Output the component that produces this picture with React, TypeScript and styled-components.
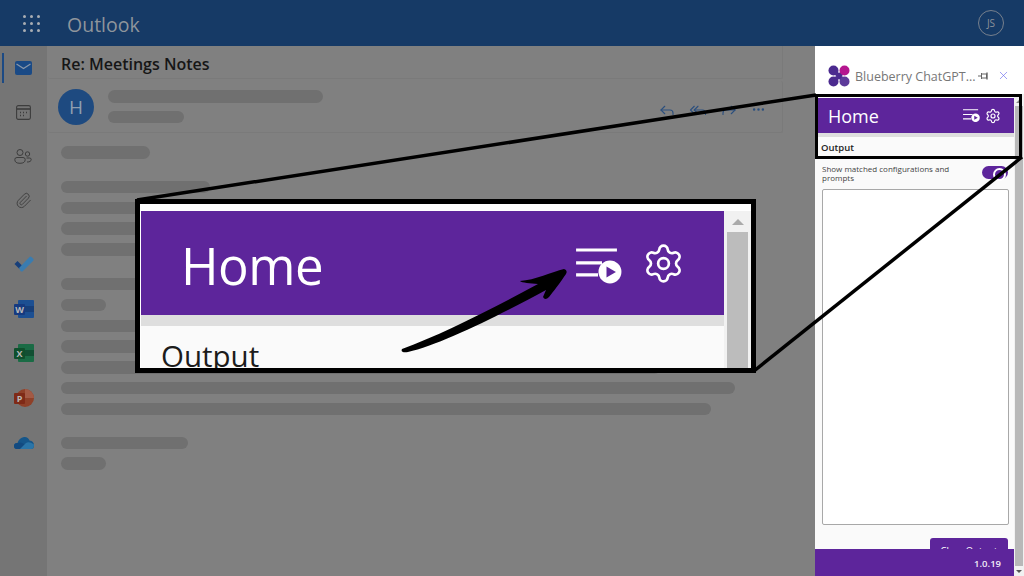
import React from "react";
import styled, { createGlobalStyle } from "styled-components";
import { Paperclip, Reply, ReplyAll, Forward, MoreHorizontal, Settings, X } from "lucide-react";

const Global = createGlobalStyle`
  html, body { margin: 0; padding: 0; height: 100%; background: #808080; }
  body { font-family: "Open Sans", "Liberation Sans", sans-serif; }
  * { box-sizing: border-box; }
`;

const PURPLE = "#5d259b";

const Root = styled.div`
  position: relative;
  width: 1024px;
  height: 576px;
  overflow: hidden;
  display: flex;
  flex-direction: column;
`;

const TopBar = styled.header`
  height: 46px;
  flex: none;
  background: #163a66;
  display: flex;
  align-items: center;
  padding: 0 20px 0 23px;
`;

const Waffle = styled.div`
  display: grid;
  grid-template-columns: repeat(3, 3px);
  gap: 4px;
  margin-right: 27px;
`;

const WaffleDot = styled.span`
  width: 3px;
  height: 3px;
  border-radius: 50%;
  background: #a9adb3;
`;

const Brand = styled.div`
  font-size: 19.5px;
  font-weight: 500;
  color: #8f959c;
  flex: 1;
  line-height: 46px;
  padding-top: 3px;
`;

const UserCircle = styled.div`
  width: 26px;
  height: 26px;
  border-radius: 50%;
  border: 1.5px solid #77808d;
  color: #8b919a;
  font-size: 10px;
  display: flex;
  align-items: center;
  justify-content: center;
`;

const Body = styled.div`
  flex: 1;
  display: flex;
  min-height: 0;
`;

const Rail = styled.nav`
  width: 47px;
  flex: none;
  background: #757575;
  display: flex;
  flex-direction: column;
  position: relative;
`;

const RailItem = styled.div<{ $active?: boolean }>`
  height: 44px;
  flex: none;
  display: flex;
  align-items: center;
  justify-content: center;
  padding-right: 1px;
  color: #3d3d3d;
  position: relative;
  ${(p) =>
    p.$active &&
    `&::before { content: ""; position: absolute; left: 2px; top: 7px; width: 2px; height: 30px; background: #1c4a84; }`}
`;

const AppItem = styled.div<{ $mt?: number }>`
  height: 44.5px;
  flex: none;
  margin-top: ${(p) => p.$mt ?? 0}px;
  display: flex;
  align-items: center;
  justify-content: center;
`;

const Main = styled.main`
  flex: 1;
  min-width: 0;
  background: #808080;
  padding-right: 32px;
  display: flex;
  flex-direction: column;
`;

const SubjectCard = styled.div`
  height: 33px;
  flex: none;
  margin-left: 1px;
  border: 1px solid #7a7a7a;
  border-top: 0;
  border-left: 0;
  border-radius: 0 0 2px 2px;
  padding: 3px 0 0 13px;
  display: flex;
  align-items: center;
  font-size: 16px;
  font-weight: 600;
  color: #161616;
`;

const SenderCard = styled.div`
  height: 52px;
  flex: none;
  margin: 2px 0 0 1px;
  border: 1px solid #7a7a7a;
  border-top: 0;
  border-left: 0;
  border-radius: 2px;
  display: flex;
  align-items: center;
  padding: 0 16px 0 10px;
`;

const Avatar = styled.div`
  width: 36px;
  height: 36px;
  border-radius: 50%;
  background: #1e4a80;
  color: #8f9eb0;
  font-size: 19px;
  display: flex;
  align-items: center;
  justify-content: center;
  flex: none;
`;

const SenderLines = styled.div`
  margin-left: 14px;
  display: flex;
  flex-direction: column;
  gap: 8px;
  flex: 1;
`;

const Skeleton = styled.div<{ $w: number; $mt?: number }>`
  width: ${(p) => p.$w}px;
  height: 12.5px;
  flex: none;
  border-radius: 7px;
  background: #707070;
  margin-top: ${(p) => p.$mt ?? 0}px;
`;

const Actions = styled.div`
  display: flex;
  align-items: center;
  gap: 13px;
  color: #2b4f7e;
  margin-top: 6px;
`;

const Lines = styled.div`
  padding: 13px 0 0 14px;
  display: flex;
  flex-direction: column;
  gap: 8.3px;
`;

const Panel = styled.aside`
  width: 209px;
  flex: none;
  background: #fff;
  display: flex;
  flex-direction: column;
`;

const PanelTitle = styled.div`
  height: 48px;
  flex: none;
  display: flex;
  align-items: center;
  padding: 11px 14px 0 13px;
`;

const PanelName = styled.span`
  font-size: 12.5px;
  color: #777;
  margin: 2px 0 0 5px;
  white-space: nowrap;
  flex: 1;
`;

const PinIcon = styled.span`
  display: flex;
  margin-right: 8px;
`;

const CloseIcon = styled.span`
  color: #6a6aef;
  display: flex;
`;

const Pane = styled.div`
  flex: 1;
  min-height: 0;
  display: flex;
`;

const PaneColumn = styled.div`
  flex: 1;
  min-width: 0;
  display: flex;
  flex-direction: column;
`;

const PaneScroll = styled.div`
  width: 10px;
  flex: none;
  background: #f1f1f1;
  display: flex;
  flex-direction: column;
  align-items: center;
  padding: 6px 0 3px;
`;

const ArrowUp = styled.span`
  width: 0;
  height: 0;
  flex: none;
  border-left: 3px solid transparent;
  border-right: 3px solid transparent;
  border-bottom: 3px solid #888;
`;

const ArrowDown = styled(ArrowUp)`
  border-bottom: 0;
  border-top: 3px solid #555;
`;

const Thumb = styled.div`
  flex: 1;
  width: 8px;
  background: #b8b8b8;
  margin: 3px 0 4px;
`;

const TopGap = styled.div`
  height: 4px;
  flex: none;
  background: #fff;
`;

const HomeBar = styled.div`
  height: 35px;
  flex: none;
  background: ${PURPLE};
  display: flex;
  align-items: center;
  padding: 0 13px 0 13px;
  color: #fff;
`;

const HomeTitle = styled.div`
  flex: 1;
  font-size: 18px;
  line-height: 35px;
  padding-top: 1px;
`;

const HomeIcons = styled.div`
  display: flex;
  align-items: center;
  gap: 5px;
`;

const Strip = styled.div`
  height: 4px;
  flex: none;
  background: #dedede;
`;

const PaneBody = styled.div`
  flex: 1;
  min-height: 0;
  overflow: hidden;
  background: #fafafa;
  padding: 4px 6px 0 7px;
  display: flex;
  flex-direction: column;
`;

const OutputLabel = styled.div`
  font-size: 9.5px;
  font-weight: 600;
  line-height: 14px;
  color: #222;
  margin-left: -1px;
`;

const ToggleRow = styled.div`
  display: flex;
  justify-content: space-between;
  align-items: flex-start;
  margin-top: 10px;
`;

const ToggleText = styled.div`
  font-size: 8px;
  line-height: 8.5px;
  color: #444;
  width: 150px;
`;

const Toggle = styled.div`
  width: 26px;
  height: 13px;
  border-radius: 7px;
  background: ${PURPLE};
  position: relative;
  margin-top: 1px;
  &::after {
    content: "";
    position: absolute;
    right: 2px;
    top: 2px;
    width: 9px;
    height: 9px;
    border-radius: 50%;
    border: 2px solid #fff;
    background: ${PURPLE};
  }
`;

const OutputBox = styled.div`
  height: 336px;
  flex: none;
  margin: 7px -1px 0 0;
  background: #fff;
  border: 1px solid #a8a8a8;
  border-radius: 2px;
`;

const ClearButton = styled.button`
  align-self: flex-end;
  flex: none;
  width: 78px;
  height: 24px;
  margin-top: 13px;
  border: 0;
  border-radius: 3px;
  background: ${PURPLE};
  color: #fff;
  font: 400 9.5px "Open Sans", sans-serif;
  padding: 0;
`;

const Footer = styled.footer`
  height: 27px;
  flex: none;
  background: ${PURPLE};
  color: #f2eef8;
  font-size: 9.5px;
  font-weight: 600;
  display: flex;
  align-items: center;
  justify-content: flex-end;
  padding: 1px 13px 0 0;
`;

const Callout = styled.div`
  position: absolute;
  left: 135px;
  top: 199px;
  width: 621px;
  height: 174px;
  border: 5px solid #000;
  background: #fff;
  overflow: hidden;
  display: flex;
`;

const CalloutMain = styled.div`
  flex: 1;
  min-width: 0;
  padding: 7px 0 0 1px;
  display: flex;
  flex-direction: column;
`;

const CalloutBar = styled.div`
  height: 104px;
  flex: none;
  background: ${PURPLE};
  color: #fff;
  display: flex;
  align-items: center;
  padding: 0 39px 0 40px;
`;

const CalloutHome = styled.div`
  flex: 1;
  font-size: 51px;
  line-height: 104px;
  font-weight: 400;
  letter-spacing: -0.5px;
  margin-top: 4px;
`;

const CalloutIcons = styled.div`
  display: flex;
  align-items: center;
  gap: 20px;
`;

const ListSlot = styled.span`
  display: flex;
  margin-top: 6px;
`;

const CalloutStrip = styled.div`
  height: 11px;
  flex: none;
  background: #dedede;
`;

const CalloutBody = styled.div`
  flex: 1;
  background: #fafafa;
  padding: 10px 0 0 20px;
  font-size: 29.5px;
  line-height: 40px;
  color: #1c1c1c;
`;

const CalloutScroll = styled.div`
  width: 27px;
  flex: none;
  background: #f1f1f1;
  margin-top: 7px;
  display: flex;
  flex-direction: column;
  align-items: center;
  padding: 8px 3px 0;
`;

const CalloutArrow = styled.span`
  width: 0;
  height: 0;
  flex: none;
  border-left: 6px solid transparent;
  border-right: 6px solid transparent;
  border-bottom: 6px solid #aaa;
`;

const CalloutThumb = styled.div`
  align-self: stretch;
  flex: 1;
  margin-top: 7px;
  background: #bcbcbc;
`;

const PanelFrame = styled.div`
  position: absolute;
  left: 815px;
  top: 94px;
  width: 207px;
  height: 65px;
  border: 3px solid #000;
`;

const Drawing = styled.svg`
  position: absolute;
  inset: 0;
  pointer-events: none;
`;

const MailGlyph = () => (
  <svg width="17" height="14" viewBox="0 0 17 14">
    <rect width="17" height="14" rx="2" fill="#1a4a86" />
    <path d="M1.5 3 L8.5 7.5 L15.5 3" fill="none" stroke="#8a97a8" strokeWidth="1.2" />
  </svg>
);

const CalendarGlyph = () => (
  <svg width="15" height="15" viewBox="0 0 15 15" fill="none" stroke="currentColor">
    <rect x="0.6" y="0.6" width="13.8" height="13.8" rx="1.6" strokeWidth="1.1" />
    <path d="M1 4 H14" strokeWidth="1.6" />
    <path d="M4 7.5 H5 M7 7.5 H8 M10 7.5 H11 M4 10.5 H5 M7 10.5 H8" strokeWidth="1.3" />
  </svg>
);

const PeopleGlyph = () => (
  <svg width="18" height="15" viewBox="0 0 18 15" fill="none" stroke="currentColor" strokeWidth="1">
    <circle cx="6" cy="3.5" r="3" />
    <path d="M0.8 10.5 Q0.8 8.5 3 8.5 H9 Q11.2 8.5 11.2 10.5 Q11.2 14.3 6 14.3 Q0.8 14.3 0.8 10.5 Z" />
    <circle cx="13.5" cy="5" r="2.2" />
    <path d="M12.5 9 H15.5 Q17.2 9 17.2 10.5 Q17.2 13 13 13" />
  </svg>
);

const PinGlyph = () => (
  <svg width="11" height="8" viewBox="0 0 11 8" fill="none" stroke="#666" strokeWidth="1">
    <path d="M0 4 H3.5 M3.5 1 V7" />
    <rect x="3.5" y="2" width="5" height="4" />
    <path d="M9 0.5 V7.5" strokeWidth="1.4" />
  </svg>
);

const TodoGlyph = () => (
  <svg width="20" height="16" viewBox="0 0 20 16">
    <path d="M0.5 8 L3.5 5 L8.5 10 L5.5 13 Z" fill="#173f7a" />
    <path d="M5 12 L15.5 1 Q16.5 0 17.5 1 L19.5 3 Q20 4 19 5 L9 15 Q7.5 16 6.5 15 Z" fill="#3a7cb0" />
  </svg>
);

const OfficeGlyph = ({ back, mid, front, letter }: { back: string; mid: string; front: string; letter: string }) => (
  <svg width="20" height="18" viewBox="0 0 20 18">
    <rect x="4" y="0" width="16" height="18" rx="1" fill={back} />
    <rect x="4" y="6" width="16" height="6" fill={mid} />
    <rect x="0" y="4" width="11" height="11" rx="1" fill={front} />
    <text x="5.5" y="13" textAnchor="middle" fontSize="9" fontWeight="700" fill="#b8b8b8" fontFamily="Open Sans, sans-serif">
      {letter}
    </text>
  </svg>
);

const PptGlyph = () => (
  <svg width="20" height="18" viewBox="0 0 20 18">
    <circle cx="11" cy="9" r="9" fill="#8f4028" />
    <path d="M11 0 A9 9 0 0 1 20 9 L11 9 Z" fill="#a35a45" />
    <rect x="0" y="4" width="11" height="11" rx="1" fill="#7f2a17" />
    <text x="5.5" y="13" textAnchor="middle" fontSize="9" fontWeight="700" fill="#b8b8b8" fontFamily="Open Sans, sans-serif">
      P
    </text>
  </svg>
);

const CloudGlyph = () => (
  <svg width="20" height="13" viewBox="0 0 20 13">
    <path d="M3 13 Q0 13 0 10 Q0 7 3.5 7 Q5 2 10 1 Q14 0.5 15.5 4.5 Q20 5 20 9.5 Q20 13 17 13 Z" fill="#15568a" />
    <path d="M3 13 Q0 13 0 10 Q0 7 3.5 7 Q7 5.5 10 8 L16 13 Z" fill="#124a80" />
    <path d="M6 13 L12 7 Q15 5 20 8.5 Q20 13 17 13 Z" fill="#2a75a8" />
  </svg>
);

const ListPlay = ({ size, fill }: { size: number; fill: string }) => (
  <svg width={size} height={size * 0.78} viewBox="0 0 46 36" fill="none">
    <path d="M0 2 H41 M0 15 H26 M0 27 H22" stroke="#fff" strokeWidth="3.2" />
    <circle cx="34" cy="24" r="11.5" fill="#fff" />
    <path d="M30.5 18.5 L40 24 L30.5 29.5 Z" fill={fill} />
  </svg>
);

const Logo = () => (
  <svg width="22" height="22" viewBox="0 0 22 22">
    <path d="M5 5 L17 17 M17 5 L5 17" stroke="#4b2a8f" strokeWidth="4" />
    <circle cx="5.5" cy="5.5" r="5" fill="#4b2a8f" />
    <circle cx="16.5" cy="5.5" r="5" fill="#b5168f" />
    <circle cx="5.5" cy="16.5" r="5" fill="#4b2a8f" />
    <circle cx="16.5" cy="16.5" r="5" fill="#5d3a9a" />
  </svg>
);

const upperRows: { w: number; mt?: number }[] = [
  { w: 89 },
  { w: 149, mt: 14 },
  { w: 600 },
  { w: 600 },
  { w: 600 },
  { w: 600, mt: 14 },
  { w: 45 },
  { w: 600 },
  { w: 600 },
  { w: 600 },
  { w: 674 },
  { w: 650 },
  { w: 127, mt: 13 },
  { w: 45 },
];

export default function App() {
  return (
    <Root>
      <Global />
      <TopBar>
        <Waffle>
          {Array.from({ length: 9 }).map((_, i) => (
            <WaffleDot key={i} />
          ))}
        </Waffle>
        <Brand>Outlook</Brand>
        <UserCircle>JS</UserCircle>
      </TopBar>
      <Body>
        <Rail>
          <RailItem $active>
            <MailGlyph />
          </RailItem>
          <RailItem>
            <CalendarGlyph />
          </RailItem>
          <RailItem>
            <PeopleGlyph />
          </RailItem>
          <RailItem>
            <Paperclip size={17} strokeWidth={1.3} />
          </RailItem>
          <AppItem $mt={20}>
            <TodoGlyph />
          </AppItem>
          <AppItem>
            <OfficeGlyph back="#1c4f92" mid="#173f7a" front="#163a80" letter="W" />
          </AppItem>
          <AppItem>
            <OfficeGlyph back="#1a6b45" mid="#124f33" front="#0f4f2c" letter="X" />
          </AppItem>
          <AppItem>
            <PptGlyph />
          </AppItem>
          <AppItem>
            <CloudGlyph />
          </AppItem>
        </Rail>
        <Main>
          <SubjectCard>Re: Meetings Notes</SubjectCard>
          <SenderCard>
            <Avatar>H</Avatar>
            <SenderLines>
              <Skeleton $w={215} />
              <Skeleton $w={76} />
            </SenderLines>
            <Actions>
              <Reply size={18} strokeWidth={1.5} />
              <ReplyAll size={18} strokeWidth={1.5} />
              <Forward size={18} strokeWidth={1.5} />
              <MoreHorizontal size={15} strokeWidth={2} />
            </Actions>
          </SenderCard>
          <Lines>
            {upperRows.map((r, i) => (
              <Skeleton key={i} $w={r.w} $mt={r.mt} />
            ))}
          </Lines>
        </Main>
        <Panel>
          <PanelTitle>
            <Logo />
            <PanelName>Blueberry ChatGPT...</PanelName>
            <PinIcon>
              <PinGlyph />
            </PinIcon>
            <CloseIcon>
              <X size={13} strokeWidth={1.2} />
            </CloseIcon>
          </PanelTitle>
          <Pane>
            <PaneColumn>
              <TopGap />
              <HomeBar>
                <HomeTitle>Home</HomeTitle>
                <HomeIcons>
                  <ListPlay size={17} fill={PURPLE} />
                  <Settings size={16} strokeWidth={1.8} />
                </HomeIcons>
              </HomeBar>
              <Strip />
              <PaneBody>
                <OutputLabel>Output</OutputLabel>
                <ToggleRow>
                  <ToggleText>Show matched configurations and prompts</ToggleText>
                  <Toggle />
                </ToggleRow>
                <OutputBox />
                <ClearButton>Clear Output</ClearButton>
              </PaneBody>
              <Footer>1.0.19</Footer>
            </PaneColumn>
            <PaneScroll>
              <ArrowUp />
              <Thumb />
              <ArrowDown />
            </PaneScroll>
          </Pane>
        </Panel>
      </Body>
      <PanelFrame />
      <Callout>
        <CalloutMain>
          <CalloutBar>
            <CalloutHome>Home</CalloutHome>
            <CalloutIcons>
              <ListSlot>
                <ListPlay size={46} fill={PURPLE} />
              </ListSlot>
              <Settings size={43} strokeWidth={1.5} />
            </CalloutIcons>
          </CalloutBar>
          <CalloutStrip />
          <CalloutBody>Output</CalloutBody>
        </CalloutMain>
        <CalloutScroll>
          <CalloutArrow />
          <CalloutThumb />
        </CalloutScroll>
      </Callout>
      <Drawing width="1024" height="576" viewBox="0 0 1024 576">
        <line x1="137" y1="200" x2="816" y2="95" stroke="#000" strokeWidth="3.5" />
        <line x1="754" y1="371" x2="1022" y2="157" stroke="#000" strokeWidth="3.5" />
        <path
          d="M402 349 C440 335 490 310 538 284 C530 283 522 283 520 281 C535 280 552 272 564 269 Q568 270 566 274 C560 283 553 292 549 297 Q545 301 543 297 L546 290 C500 315 440 345 408 352 Q400 353 402 349 Z"
          fill="#000"
        />
      </Drawing>
    </Root>
  );
}
